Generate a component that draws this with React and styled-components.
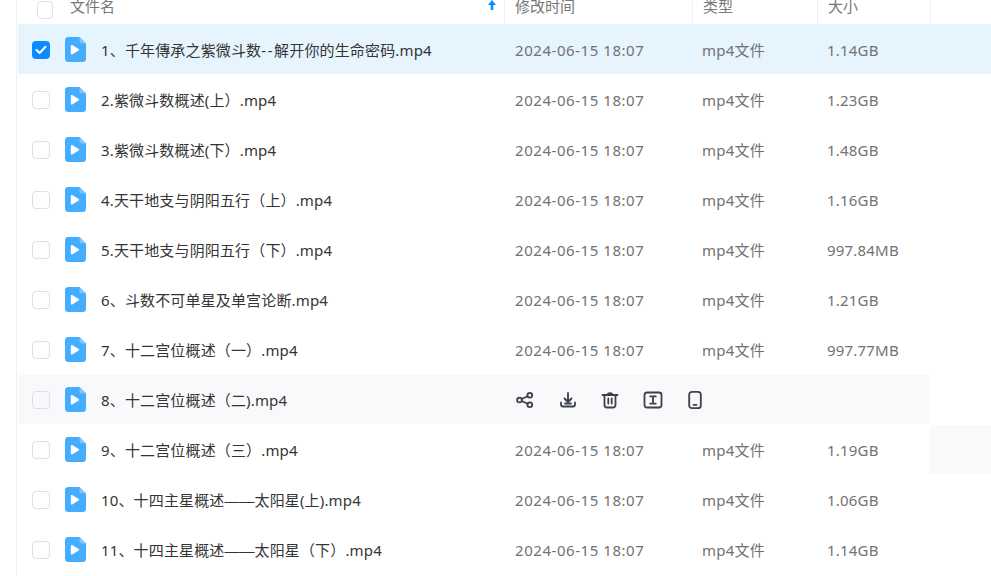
import React from 'react';
import styled, { createGlobalStyle } from 'styled-components';

const Global = createGlobalStyle`
  html, body { margin: 0; padding: 0; background: #fff; overflow: hidden; }
  body { font-family: "Noto Sans", "Noto Sans CJK SC", sans-serif; font-size: 15px; }
`;

const SEL = '#e6f4fd';
const HOV = '#f9f9fb';

const Page = styled.div`
  width: 991px;
  height: 576px;
  overflow: hidden;
  padding-left: 16px;
  box-sizing: border-box;
`;
const Table = styled.div`
  border-left: 1px solid #f1f2f4;
  height: 576px;
  padding-left: 1px;
`;
const HeaderRow = styled.div`
  display: grid;
  grid-template-columns: 487px 188px 125px 113px 1fr;
  height: 24px;
  overflow: hidden;
`;
const HeaderCell = styled.div`
  display: flex;
  align-items: flex-end;
  padding: 0 0 8px 10px;
  box-sizing: border-box;
  height: 24px;
  border-right: 1px solid #eeeff1;
  color: #777;
  line-height: 20px;
`;
const NameHeader = styled(HeaderCell)`
  padding-left: 19px;
  padding-right: 7px;
  gap: 17px;
`;
const HeaderBox = styled.span`
  flex: none;
  width: 16px;
  height: 18px;
  box-sizing: border-box;
  border: 1.5px solid #dfe1e5;
  border-radius: 4px;
  margin-bottom: -3px;
`;
const SortArrow = styled.svg`
  margin-left: auto;
  margin-bottom: 5px;
`;
const Row = styled.div`
  display: grid;
  grid-template-columns: 487px 188px 125px 112px 1fr;
  height: 50px;
  box-sizing: border-box;
  align-items: stretch;
  border-top: 1px solid ${p => (p.$selected ? SEL : 'transparent')};
`;
const NameCell = styled.div`
  display: flex;
  align-items: center;
  padding: 1px 0 0 14px;
  background: ${p => p.$bg || 'transparent'};
`;
const DateCell = styled.div`
  display: flex;
  align-items: center;
  padding: 1px 0 0 10px;
  background: ${p => p.$bg || 'transparent'};
  color: #727272;
  letter-spacing: 0.55px;
`;
const TypeCell = styled.div`
  display: flex;
  align-items: center;
  padding: 0 0 1px 9px;
  background: ${p => p.$bg || 'transparent'};
  color: #727272;
  letter-spacing: 0.2px;
`;
const SizeCell = styled(DateCell)`
  padding-left: 9px;
  letter-spacing: 0.2px;
`;
const Actions = styled.div`
  grid-column: span 3;
  display: flex;
  align-items: center;
  gap: 22.5px;
  padding: 1px 0 0 10px;
  background: ${p => p.$bg};
`;
const Tail = styled.div`
  background: ${p => p.$bg || 'transparent'};
`;
const CheckBox = styled.span`
  flex: none;
  width: 18px;
  height: 18px;
  box-sizing: border-box;
  border-radius: 4px;
  border: ${p => (p.$on ? 'none' : '1.5px solid #dcdfe4')};
  background: ${p => (p.$on ? '#0a8cff' : 'transparent')};
  display: flex;
  align-items: center;
  justify-content: center;
`;
const FileIcon = styled.svg`
  flex: none;
  margin: 0 15px 1px 15px;
`;
const FileName = styled.span`
  color: #353535;
  letter-spacing: 0.15px;
  white-space: nowrap;
  margin-bottom: 2px;
`;
const WideDash = styled.span`
  font-family: "Liberation Sans", sans-serif;
  letter-spacing: 0;
`;
const WideHyphen = styled.span`
  letter-spacing: 1.6px;
`;

const PlayFile = () => (
  <FileIcon width="21" height="25" viewBox="0 0 21 25">
    <path d="M3.5 0H14.5L21 6.5V21.5a3.5 3.5 0 0 1-3.5 3.5H3.5a3.5 3.5 0 0 1-3.5-3.5V3.5a3.5 3.5 0 0 1 3.5-3.5Z" fill="#45adff" />
    <path d="M14.5 0L21 6.5H17a2.5 2.5 0 0 1-2.5-2.5Z" fill="#7cc5ff" />
    <path d="M5.8 8.8a.9.9 0 0 1 1.4-.7l6.5 3.9a.9.9 0 0 1 0 1.5l-6.5 3.9a.9.9 0 0 1-1.4-.7Z" fill="#fff" />
  </FileIcon>
);

const ActionIcon = ({ children }) => (
  <svg width="20" height="20" viewBox="0 0 20 20" fill="none" stroke="#3a414d" strokeWidth="1.8" strokeLinecap="round" strokeLinejoin="round">
    {children}
  </svg>
);

const renderName = name =>
  name.split(/(——|--)/).map((part, i) => {
    if (part === '——') return <WideDash key={i}>{part}</WideDash>;
    if (part === '--') return <WideHyphen key={i}>{part}</WideHyphen>;
    return part;
  });

const files = [
  ['1、千年傳承之紫微斗数--解开你的生命密码.mp4', '1.14GB'],
  ['2.紫微斗数概述(上）.mp4', '1.23GB'],
  ['3.紫微斗数概述(下）.mp4', '1.48GB'],
  ['4.天干地支与阴阳五行（上）.mp4', '1.16GB'],
  ['5.天干地支与阴阳五行（下）.mp4', '997.84MB'],
  ['6、斗数不可单星及单宫论断.mp4', '1.21GB'],
  ['7、十二宫位概述（一）.mp4', '997.77MB'],
  ['8、十二宫位概述（二).mp4', ''],
  ['9、十二宫位概述（三）.mp4', '1.19GB'],
  ['10、十四主星概述——太阳星(上).mp4', '1.06GB'],
  ['11、十四主星概述——太阳星（下）.mp4', '1.14GB'],
];

export default function App() {
  return (
    <Page>
      <Global />
      <Table>
        <HeaderRow>
          <NameHeader>
            <HeaderBox />
            <span>文件名</span>
            <SortArrow width="10" height="12" viewBox="0 0 10 12">
              <path d="M5 1L9 6H6.3V11H3.7V6H1Z" fill="#0a8cff" />
            </SortArrow>
          </NameHeader>
          <HeaderCell>修改时间</HeaderCell>
          <HeaderCell>类型</HeaderCell>
          <HeaderCell>大小</HeaderCell>
        </HeaderRow>
        {files.map(([name, size], i) => {
          const bg = i === 0 ? SEL : i === 7 ? HOV : undefined;
          return (
            <Row key={name} $selected={i === 0}>
              <NameCell $bg={bg}>
                <CheckBox $on={i === 0}>
                  {i === 0 && (
                    <svg width="12" height="10" viewBox="0 0 12 10">
                      <path d="M1.5 5L4.6 8L10.5 1.8" fill="none" stroke="#fff" strokeWidth="2" strokeLinecap="round" strokeLinejoin="round" />
                    </svg>
                  )}
                </CheckBox>
                <PlayFile />
                <FileName>{renderName(name)}</FileName>
              </NameCell>
              {i === 7 ? (
                <Actions $bg={HOV}>
                  <ActionIcon>
                    <circle cx="4.5" cy="10" r="2.4" />
                    <circle cx="14.8" cy="5.2" r="2.4" />
                    <circle cx="14.8" cy="14.8" r="2.4" />
                    <path d="M6.8 9L12.6 6.2M6.8 11L12.6 13.8" />
                  </ActionIcon>
                  <ActionIcon>
                    <path d="M10 3V11.5M6.5 8.5L10 12L13.5 8.5" />
                    <path d="M3 12.5V14.5A2 2 0 0 0 5 16.5H15A2 2 0 0 0 17 14.5V12.5" />
                    <path d="M7 13.5H13" />
                  </ActionIcon>
                  <ActionIcon>
                    <path d="M2.5 5H17.5M7.5 4.5C8 2.6 12 2.6 12.5 4.5" />
                    <path d="M4.5 5.5V15A2.5 2.5 0 0 0 7 17.5H13A2.5 2.5 0 0 0 15.5 15V5.5" />
                    <path d="M8.3 8.5V13.5M11.7 8.5V13.5" />
                  </ActionIcon>
                  <ActionIcon>
                    <rect x="1.5" y="2.5" width="17" height="15" rx="2.5" />
                    <path d="M7.2 6.4H12.8M7.2 13.6H12.8M10 6.4V13.6" />
                  </ActionIcon>
                  <ActionIcon>
                    <rect x="4.2" y="1.8" width="11.6" height="16.4" rx="2.8" />
                    <path d="M8.5 14.8H11.5" />
                  </ActionIcon>
                </Actions>
              ) : (
                <>
                  <DateCell $bg={bg}>2024-06-15 18:07</DateCell>
                  <TypeCell $bg={bg}>mp4文件</TypeCell>
                  <SizeCell $bg={bg}>{size}</SizeCell>
                </>
              )}
              <Tail $bg={i === 0 ? SEL : i === 8 ? HOV : undefined} />
            </Row>
          );
        })}
      </Table>
    </Page>
  );
}
